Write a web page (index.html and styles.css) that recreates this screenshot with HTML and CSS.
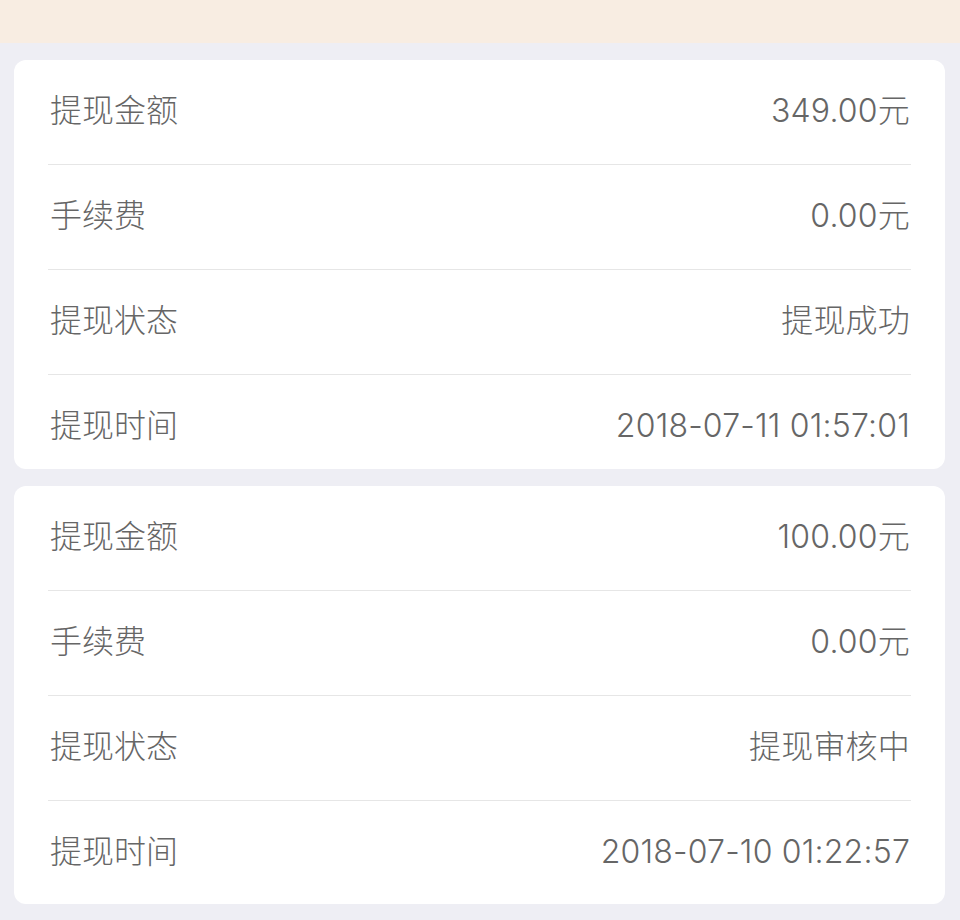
FILE: index.html
```html
<html>
  <head>
    <title>提现记录</title>
    <link rel="stylesheet" href="styles.css">
  </head>
  <body>
    <div id="notice"></div>
    <div id="records">
      <div class="card card-short">
        <div class="row"><span class="label">提现金额</span><span class="value">349.00元</span></div>
        <div class="row"><span class="label">手续费</span><span class="value">0.00元</span></div>
        <div class="row"><span class="label">提现状态</span><span class="value">提现成功</span></div>
        <div class="row"><span class="label">提现时间</span><span class="value">2018-07-11 01:57:01</span></div>
      </div>
      <div class="card">
        <div class="row"><span class="label">提现金额</span><span class="value">100.00元</span></div>
        <div class="row"><span class="label">手续费</span><span class="value">0.00元</span></div>
        <div class="row"><span class="label">提现状态</span><span class="value">提现审核中</span></div>
        <div class="row"><span class="label">提现时间</span><span class="value">2018-07-10 01:22:57</span></div>
      </div>
      <div class="card card-next"></div>
    </div>
  </body>
</html>
```

FILE: styles.css
```css
body {
  margin: 0;
  background-color: #eeeef4;
  font-family: Inter, "Noto Sans CJK SC", sans-serif;
  font-weight: 300;
  color: #666666;
  overflow: hidden;
}
#notice {
  height: 43px;
  background-color: #f8ede2;
}
#records {
  display: flex;
  flex-direction: column;
  gap: 17px;
  padding: 17px 15px 0 14px;
}
.card {
  background-color: #ffffff;
  border-radius: 12px;
  padding: 0 34px;
}
.card-next {
  height: 60px;
}
.row {
  display: flex;
  justify-content: space-between;
  box-sizing: border-box;
  height: 105px;
  padding-top: 35px;
  border-bottom: 1px solid #e6e6e6;
  font-size: 32px;
  line-height: 32px;
}
.row:last-child {
  border-bottom: none;
  height: 103px;
}
.card-short .row:last-child {
  height: 94px;
}
.label {
  padding-left: 2px;
}
.value {
  padding-right: 1px;
  letter-spacing: 0.2px;
}
```
